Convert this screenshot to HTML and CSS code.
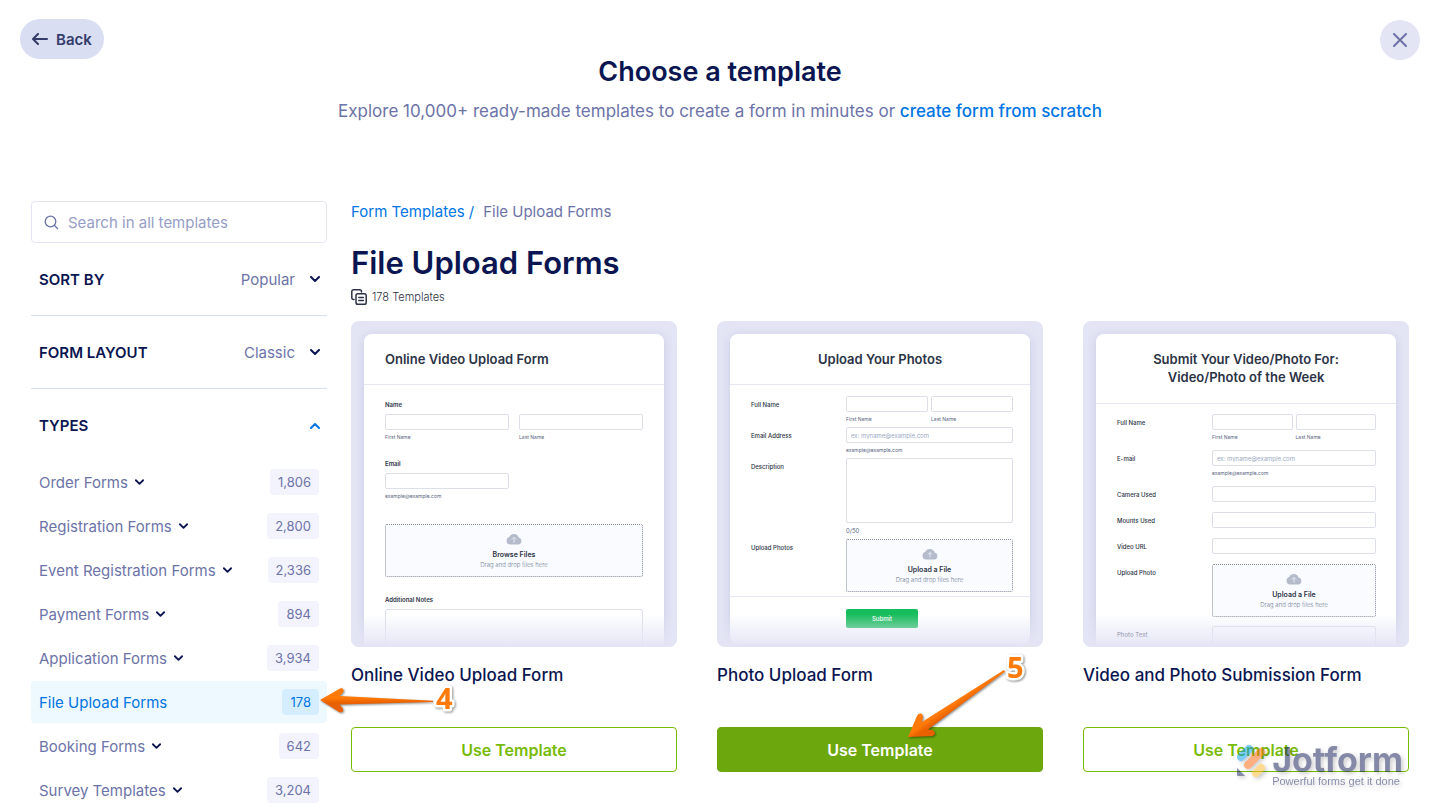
FILE: index.html
```html
<!DOCTYPE html>
<html lang="en">
<head>
    <meta charset="UTF-8">
    <meta name="viewport" content="width=device-width, initial-scale=1.0">
    <title>Choose a template</title>
    <link rel="stylesheet" href="styles.css">
</head>
<body>
    <!-- shared icons -->
    <svg class="sprite" aria-hidden="true">
        <symbol id="chevron" viewBox="0 0 10 7">
            <path d="M1 1l4 4 4-4" fill="none" stroke="currentColor" stroke-width="2" stroke-linecap="round" stroke-linejoin="round"/>
        </symbol>
        <symbol id="cloud" viewBox="0 0 16 12">
            <path d="M4 11.500a3.800 3.800 0 0 1-.8-7.400A5 5 0 0 1 12.600 4.600 3.500 3.500 0 0 1 12.300 11.500z" fill="#b4bccc"/>
            <path d="M8 9.500V4.500M5.800 6.500L8 4.300l2.200 2.200" fill="none" stroke="#e4e8f2" stroke-width="1"/>
        </symbol>
    </svg>

    <header class="header">
        <button class="back" type="button">
            <svg width="16" height="12" viewBox="0 0 16 12"><path d="M15 6H1.500M6 1L1 6l5 5" fill="none" stroke="currentColor" stroke-width="2" stroke-linecap="round" stroke-linejoin="round"/></svg>
            Back
        </button>
        <div class="heading">
            <h1>Choose a template</h1>
            <p>Explore 10,000+ ready-made templates to create a form in minutes or <a href="#scratch">create form from scratch</a></p>
        </div>
        <button class="close" type="button" aria-label="Close">
            <svg width="14" height="14" viewBox="0 0 14 14"><path d="M1 1l12 12M13 1L1 13" fill="none" stroke="currentColor" stroke-width="2" stroke-linecap="round"/></svg>
        </button>
    </header>

    <div class="layout">
        <aside class="sidebar">
            <div class="search">
                <svg width="15" height="15" viewBox="0 0 15 15"><circle cx="6.500" cy="6.500" r="5.300" fill="none" stroke="currentColor" stroke-width="1.300"/><path d="M10.500 10.500l3 3" stroke="currentColor" stroke-width="1.300" stroke-linecap="round"/></svg>
                <input type="search" placeholder="Search in all templates" aria-label="Search in all templates">
            </div>
            <div class="filter">
                <label for="sort">SORT BY</label>
                <select id="sort"><option>Popular</option></select>
                <svg class="chevron"><use href="#chevron"/></svg>
            </div>
            <div class="filter">
                <label for="form-layout">FORM LAYOUT</label>
                <select id="form-layout"><option>Classic</option></select>
                <svg class="chevron"><use href="#chevron"/></svg>
            </div>
            <button class="types-toggle" type="button" aria-expanded="true">
                TYPES
                <svg class="chevron up"><use href="#chevron"/></svg>
            </button>
            <ul class="types">
                <li><a href="#order">Order Forms <svg class="chevron small"><use href="#chevron"/></svg><span class="count">1,806</span></a></li>
                <li><a href="#registration">Registration Forms <svg class="chevron small"><use href="#chevron"/></svg><span class="count">2,800</span></a></li>
                <li><a href="#event">Event Registration Forms <svg class="chevron small"><use href="#chevron"/></svg><span class="count">2,336</span></a></li>
                <li><a href="#payment">Payment Forms <svg class="chevron small"><use href="#chevron"/></svg><span class="count">894</span></a></li>
                <li><a href="#application">Application Forms <svg class="chevron small"><use href="#chevron"/></svg><span class="count">3,934</span></a></li>
                <li class="current">
                    <a class="active" href="#upload">File Upload Forms <span class="count">178</span></a>
                    <svg class="callout callout-4" width="140" height="40" viewBox="0 0 140 40">
                        <defs>
                            <linearGradient id="orange4" x1="0" y1="0" x2="0" y2="1">
                                <stop offset="0.400" stop-color="#ff7a08"/>
                                <stop offset="0.600" stop-color="#e96000"/>
                            </linearGradient>
                        </defs>
                        <path d="M1 20L21 8.500c3-1.500 5 2 2.500 4.500L20.500 16 114 20.800v1.200L20.500 24.500l3 3.500c2 3-.5 5.500-3.500 4z" fill="url(#orange4)"/>
                        <text x="117" y="29">4</text>
                    </svg>
                </li>
                <li><a href="#booking">Booking Forms <svg class="chevron small"><use href="#chevron"/></svg><span class="count">642</span></a></li>
                <li><a href="#survey">Survey Templates <svg class="chevron small"><use href="#chevron"/></svg><span class="count">3,204</span></a></li>
            </ul>
        </aside>

        <main class="content">
            <nav class="breadcrumb" aria-label="Breadcrumb">
                <a href="#templates">Form Templates /</a>
                <span>File Upload Forms</span>
            </nav>
            <h2>File Upload Forms</h2>
            <p class="total">
                <svg width="16" height="16" viewBox="0 0 16 16" fill="none" stroke="currentColor" stroke-width="1.500" stroke-linecap="round" stroke-linejoin="round"><path d="M3 10.500H2.500A1.700 1.700 0 0 1 .8 8.800V2.500A1.700 1.700 0 0 1 2.500.8h6.300a1.700 1.700 0 0 1 1.700 1.700V3"/><rect x="5" y="4.800" width="10.200" height="10.400" rx="1.800"/><path d="M7.800 8.500h4.600M7.800 11.500h4.600"/></svg>
                178 Templates
            </p>

            <div class="cards">
                <article class="card">
                    <div class="thumb">
                        <div class="preview stacked">
                            <h4>Online Video Upload Form</h4>
                            <div class="preview-body">
                                <div class="field">
                                    <label for="v-first">Name</label>
                                    <div class="pair">
                                        <div><input id="v-first" type="text"><small>First Name</small></div>
                                        <div><input type="text" aria-label="Last Name"><small>Last Name</small></div>
                                    </div>
                                </div>
                                <div class="field">
                                    <label for="v-email">Email</label>
                                    <div class="pair">
                                        <div><input id="v-email" type="email"><small>example@example.com</small></div>
                                    </div>
                                </div>
                                <button class="drop" type="button"><svg><use href="#cloud"/></svg><b>Browse Files</b><span>Drag and drop files here</span></button>
                                <div class="field">
                                    <label for="v-notes">Additional Notes</label>
                                    <textarea id="v-notes"></textarea>
                                </div>
                            </div>
                        </div>
                    </div>
                    <h3>Online Video Upload Form</h3>
                    <button class="use" type="button">Use Template</button>
                </article>

                <article class="card">
                    <div class="thumb">
                        <div class="preview photos">
                            <h4>Upload Your Photos</h4>
                            <div class="preview-body">
                                <div class="row">
                                    <label for="p-first">Full Name</label>
                                    <div class="pair">
                                        <div><input id="p-first" type="text"><small>First Name</small></div>
                                        <div><input type="text" aria-label="Last Name"><small>Last Name</small></div>
                                    </div>
                                </div>
                                <div class="row">
                                    <label for="p-email">Email Address</label>
                                    <div><input id="p-email" type="email" placeholder="ex: myname@example.com"><small>example@example.com</small></div>
                                </div>
                                <div class="row">
                                    <label for="p-desc">Description</label>
                                    <div><textarea id="p-desc"></textarea><small class="limit">0/50</small></div>
                                </div>
                                <div class="row">
                                    <label for="p-file">Upload Photos</label>
                                    <button id="p-file" class="drop" type="button"><svg><use href="#cloud"/></svg><b>Upload a File</b><span>Drag and drop files here</span></button>
                                </div>
                            </div>
                            <div class="preview-footer"><button class="submit" type="button">Submit</button></div>
                        </div>
                    </div>
                    <h3>Photo Upload Form</h3>
                    <div class="action">
                        <button class="use primary" type="button">Use Template</button>
                        <svg class="callout callout-5" width="130" height="90" viewBox="0 0 130 90">
                            <defs>
                                <linearGradient id="orange5" gradientUnits="userSpaceOnUse" x1="52" y1="48" x2="60" y2="60">
                                    <stop offset="0.400" stop-color="#ff7a08"/>
                                    <stop offset="0.800" stop-color="#e96000"/>
                                </linearGradient>
                            </defs>
                            <path d="M8 87L17 66c2-4 6-3 6 1l-1 5L104 20l1 1.500L28 79.500l4 .5c4 1 3.500 5.500 0 6z" fill="url(#orange5)"/>
                            <text x="107" y="28">5</text>
                        </svg>
                    </div>
                </article>

                <article class="card">
                    <div class="thumb">
                        <div class="preview submission">
                            <h4>Submit Your Video/Photo For:<br>Video/Photo of the Week</h4>
                            <div class="preview-body">
                                <div class="row">
                                    <label for="s-first">Full Name</label>
                                    <div class="pair">
                                        <div><input id="s-first" type="text"><small>First Name</small></div>
                                        <div><input type="text" aria-label="Last Name"><small>Last Name</small></div>
                                    </div>
                                </div>
                                <div class="row">
                                    <label for="s-email">E-mail</label>
                                    <div><input id="s-email" type="email" placeholder="ex: myname@example.com"><small>example@example.com</small></div>
                                </div>
                                <div class="row"><label for="s-camera">Camera Used</label><input id="s-camera" type="text"></div>
                                <div class="row"><label for="s-mounts">Mounts Used</label><input id="s-mounts" type="text"></div>
                                <div class="row"><label for="s-url">Video URL</label><input id="s-url" type="url"></div>
                                <div class="row">
                                    <label for="s-file">Upload Photo</label>
                                    <button id="s-file" class="drop" type="button"><svg><use href="#cloud"/></svg><b>Upload a File</b><span>Drag and drop files here</span></button>
                                </div>
                                <div class="row"><label for="s-text">Photo Text</label><textarea id="s-text"></textarea></div>
                            </div>
                        </div>
                    </div>
                    <h3>Video and Photo Submission Form</h3>
                    <button class="use" type="button">Use Template</button>
                </article>
            </div>
        </main>
    </div>

    <div class="watermark">
        <svg width="30" height="34" viewBox="0 0 30 34" fill="none" stroke-width="8" stroke-linecap="round">
            <path d="M5 13l8-8" stroke="#0099ff"/>
            <path d="M12 21L25 8" stroke="#ff6100"/>
            <path d="M20 29l5-5" stroke="#ffb629"/>
            <path d="M1 24l8 8H2.500Q1 32 1 30.500z" fill="#0a1551"/>
        </svg>
        <div>
            <strong>Jotform</strong>
            <span>Powerful forms get it done</span>
        </div>
    </div>
</body>
</html>
```

FILE: styles.css
```css
* {
    box-sizing: border-box;
}
html, body {
    margin: 0;
    height: 100%;
    overflow: hidden;
}
body {
    background-color: #fff;
    color: #0a1551;
    font-family: Inter, "Open Sans", sans-serif;
    font-size: 15px;
}
h1, h2, h3, h4, p, ul {
    margin: 0;
    padding: 0;
}
button, input, select, textarea {
    margin: 0;
    padding: 0;
    border: none;
    background: none;
    color: inherit;
    font: inherit;
}
button {
    cursor: pointer;
}
a {
    color: #0075e3;
    text-decoration: none;
}
.sprite {
    display: none;
}

/* header */
.header {
    display: grid;
    grid-template-columns: 1fr auto 1fr;
    align-items: start;
    padding: 19px 20px 0;
    height: 201px;
}
.back {
    display: flex;
    align-items: center;
    gap: 8px;
    justify-self: start;
    height: 40px;
    padding: 0 12px;
    border-radius: 20px;
    background-color: #dadef3;
    color: #343c6a;
    font-weight: 600;
}
.close {
    display: flex;
    align-items: center;
    justify-content: center;
    justify-self: end;
    width: 40px;
    height: 40px;
    margin-top: 1px;
    border-radius: 50%;
    background-color: #e3e5f5;
    color: #6c73a8;
}
.heading {
    padding-top: 35px;
    text-align: center;
}
.heading h1 {
    font-size: 27px;
    line-height: 36px;
    font-weight: 600;
}
.heading p {
    margin-top: 9px;
    color: #6c73a8;
    font-size: 17px;
    line-height: 24px;
}
.heading a {
    font-weight: 500;
}

.layout {
    display: flex;
    gap: 24px;
    padding: 0 31px;
}

/* sidebar */
.sidebar {
    flex: 0 0 296px;
}
.search {
    display: flex;
    align-items: center;
    gap: 9px;
    height: 42px;
    padding: 0 12px;
    border: 1px solid #e3e5f5;
    border-radius: 4px;
    color: #6c73a8;
}
.search input {
    flex: 1;
    min-width: 0;
    outline: none;
}
.search input::placeholder {
    color: #979dc6;
}
.filter, .types-toggle {
    display: flex;
    align-items: center;
    width: 100%;
    height: 73px;
    padding: 0 7px 0 8px;
}
.filter {
    border-bottom: 1px solid #dadef3;
}
.filter label, .types-toggle {
    font-weight: 600;
}
.filter select {
    flex: 1;
    min-width: 0;
    margin-right: 15px;
    appearance: none;
    color: #6c73a8;
    text-align-last: right;
}
.types-toggle {
    justify-content: space-between;
    height: 72px;
}
.chevron {
    width: 10px;
    height: 7px;
    color: #0a1551;
}
.chevron.up {
    color: #0075e3;
    transform: rotate(180deg);
}
.chevron.small {
    width: 9px;
    height: 7px;
    margin-left: 7px;
}
.types {
    display: flex;
    flex-direction: column;
    gap: 2px;
    list-style: none;
}
.types a {
    display: flex;
    align-items: center;
    height: 42px;
    padding: 0 8px;
    border-radius: 4px;
    color: #6c73a8;
}
.count {
    margin-left: auto;
    padding: 0 8px;
    border-radius: 4px;
    background-color: #f3f3fe;
    font-size: 13px;
    line-height: 26px;
}
.types a.active {
    background-color: #edf8ff;
    color: #0075e3;
}
.active .count {
    background-color: #d5eeff;
}

/* content */
.content {
    flex: 1;
    min-width: 0;
}
.breadcrumb {
    display: flex;
    gap: 9px;
    line-height: 22px;
    color: #6c73a8;
}
.content h2 {
    margin-top: 20px;
    font-size: 31px;
    line-height: 40px;
    font-weight: 600;
}
.total {
    display: flex;
    align-items: center;
    gap: 5px;
    margin-top: 4px;
    color: #2c3345;
    font-size: 11px;
    line-height: 20px;
    font-weight: 300;
}
.cards {
    display: grid;
    grid-template-columns: repeat(3, minmax(0, 1fr));
    gap: 40px;
    margin-top: 14px;
}
.card h3 {
    margin: 16px 0 40px;
    font-size: 17px;
    line-height: 24px;
    font-weight: 500;
}
.use {
    display: block;
    width: 100%;
    height: 45px;
    border: 1px solid #78bb07;
    border-radius: 4px;
    background-color: #fff;
    color: #78bb07;
    font-size: 16px;
    font-weight: 600;
}
.use.primary {
    border-color: #6ca70d;
    background-color: #6ca70d;
    color: #fff;
}

/* form thumbnails */
.thumb {
    position: relative;
    aspect-ratio: 1;
    overflow: hidden;
    padding: 13px 13px 0;
    border-radius: 8px;
    background-color: #e3e5f5;
}
.thumb::after {
    content: "";
    position: absolute;
    left: 0;
    right: 0;
    bottom: 0;
    height: 33px;
    background: linear-gradient(rgba(227, 229, 245, 0), #e3e5f5);
    pointer-events: none;
}
.preview {
    border-radius: 8px;
    background-color: #fff;
    box-shadow: 0 2px 10px rgba(84, 95, 155, 0.18);
    color: #2c3345;
    font-size: 6px;
    font-weight: 500;
}
.preview h4 {
    padding: 16px 21px;
    border-bottom: 1px solid #e6e7f0;
    font-size: 13px;
    line-height: 18px;
    font-weight: 600;
    text-align: center;
}
.stacked h4 {
    text-align: left;
}
.preview-body {
    display: flex;
    flex-direction: column;
}
.preview input, .preview textarea {
    display: block;
    width: 100%;
    height: 16px;
    padding: 0 4px;
    border: 1px solid #dcdfe9;
    border-radius: 2px;
    resize: none;
}
.preview textarea {
    height: 65px;
}
.preview input::placeholder {
    color: #9ba9bf;
    font-weight: 400;
}
.preview label {
    display: block;
    line-height: 17px;
}
.preview small {
    display: block;
    margin-top: 3px;
    color: #57647e;
    font-size: 5px;
    line-height: 8px;
    font-weight: 400;
}
.preview small.limit {
    font-size: 6px;
    line-height: 9px;
}
.pair {
    display: grid;
    grid-template-columns: 1fr 1fr;
    gap: 3px;
}
.row {
    display: grid;
    grid-template-columns: 95px minmax(0, 1fr);
    align-items: start;
}
.drop {
    display: flex;
    flex-direction: column;
    align-items: center;
    width: 100%;
    height: 53px;
    padding-top: 8px;
    border: 1px dotted #858b9b;
    border-radius: 2px;
    background-color: #fafbff;
}
.drop svg {
    width: 16px;
    height: 12px;
}
.drop b {
    margin-top: 4px;
    font-size: 7px;
    line-height: 11px;
    font-weight: 600;
}
.drop span {
    color: #6f7c95;
    font-size: 6px;
    line-height: 10px;
    font-weight: 300;
}
.stacked .preview-body {
    padding: 15px 21px 0;
}
.stacked label {
    margin-bottom: 4px;
    font-weight: 600;
    line-height: 10px;
}
.stacked .pair {
    gap: 10px;
}
.stacked .field + .field {
    margin-top: 18px;
}
.stacked .drop {
    margin: 24px 0 18px;
}
.photos .preview-body {
    gap: 4px;
    padding: 11px 17px 4px 21px;
}
.preview-footer {
    padding: 12px 116px 16px;
    border-top: 1px solid #e6e7f0;
}
.submit {
    display: block;
    width: 72px;
    height: 19px;
    border-radius: 2px;
    background-color: #18bd5b;
    color: #fff;
}
.submission h4 {
    padding-bottom: 17px;
}
.submission .preview-body {
    gap: 9px;
    padding: 10px 20px 0 21px;
}

/* numbered arrows */
.current, .action {
    position: relative;
}
.callout {
    position: absolute;
    z-index: 2;
    overflow: visible;
    filter: drop-shadow(1px 1px 1px rgba(0, 0, 0, 0.45));
    pointer-events: none;
}
.callout text {
    fill: #ff7a08;
    stroke: #fff;
    stroke-width: 5px;
    stroke-linejoin: round;
    paint-order: stroke;
    font-family: "Open Sans", sans-serif;
    font-size: 29px;
    font-weight: 700;
}
.callout-4 {
    top: -1px;
    left: 288px;
}
.callout-5 {
    top: -77px;
    left: 183px;
}

.watermark {
    position: fixed;
    right: 37px;
    bottom: 24px;
    z-index: 3;
    display: flex;
    gap: 6px;
    opacity: 0.5;
    filter: drop-shadow(2px 2px 2px rgba(0, 0, 0, 0.4));
    pointer-events: none;
}
.watermark strong, .watermark span {
    display: block;
}
.watermark strong {
    font-size: 34px;
    line-height: 32px;
    font-weight: 700;
}
.watermark span {
    font-family: "Liberation Sans", sans-serif;
    font-size: 11px;
    line-height: 10px;
}
```
